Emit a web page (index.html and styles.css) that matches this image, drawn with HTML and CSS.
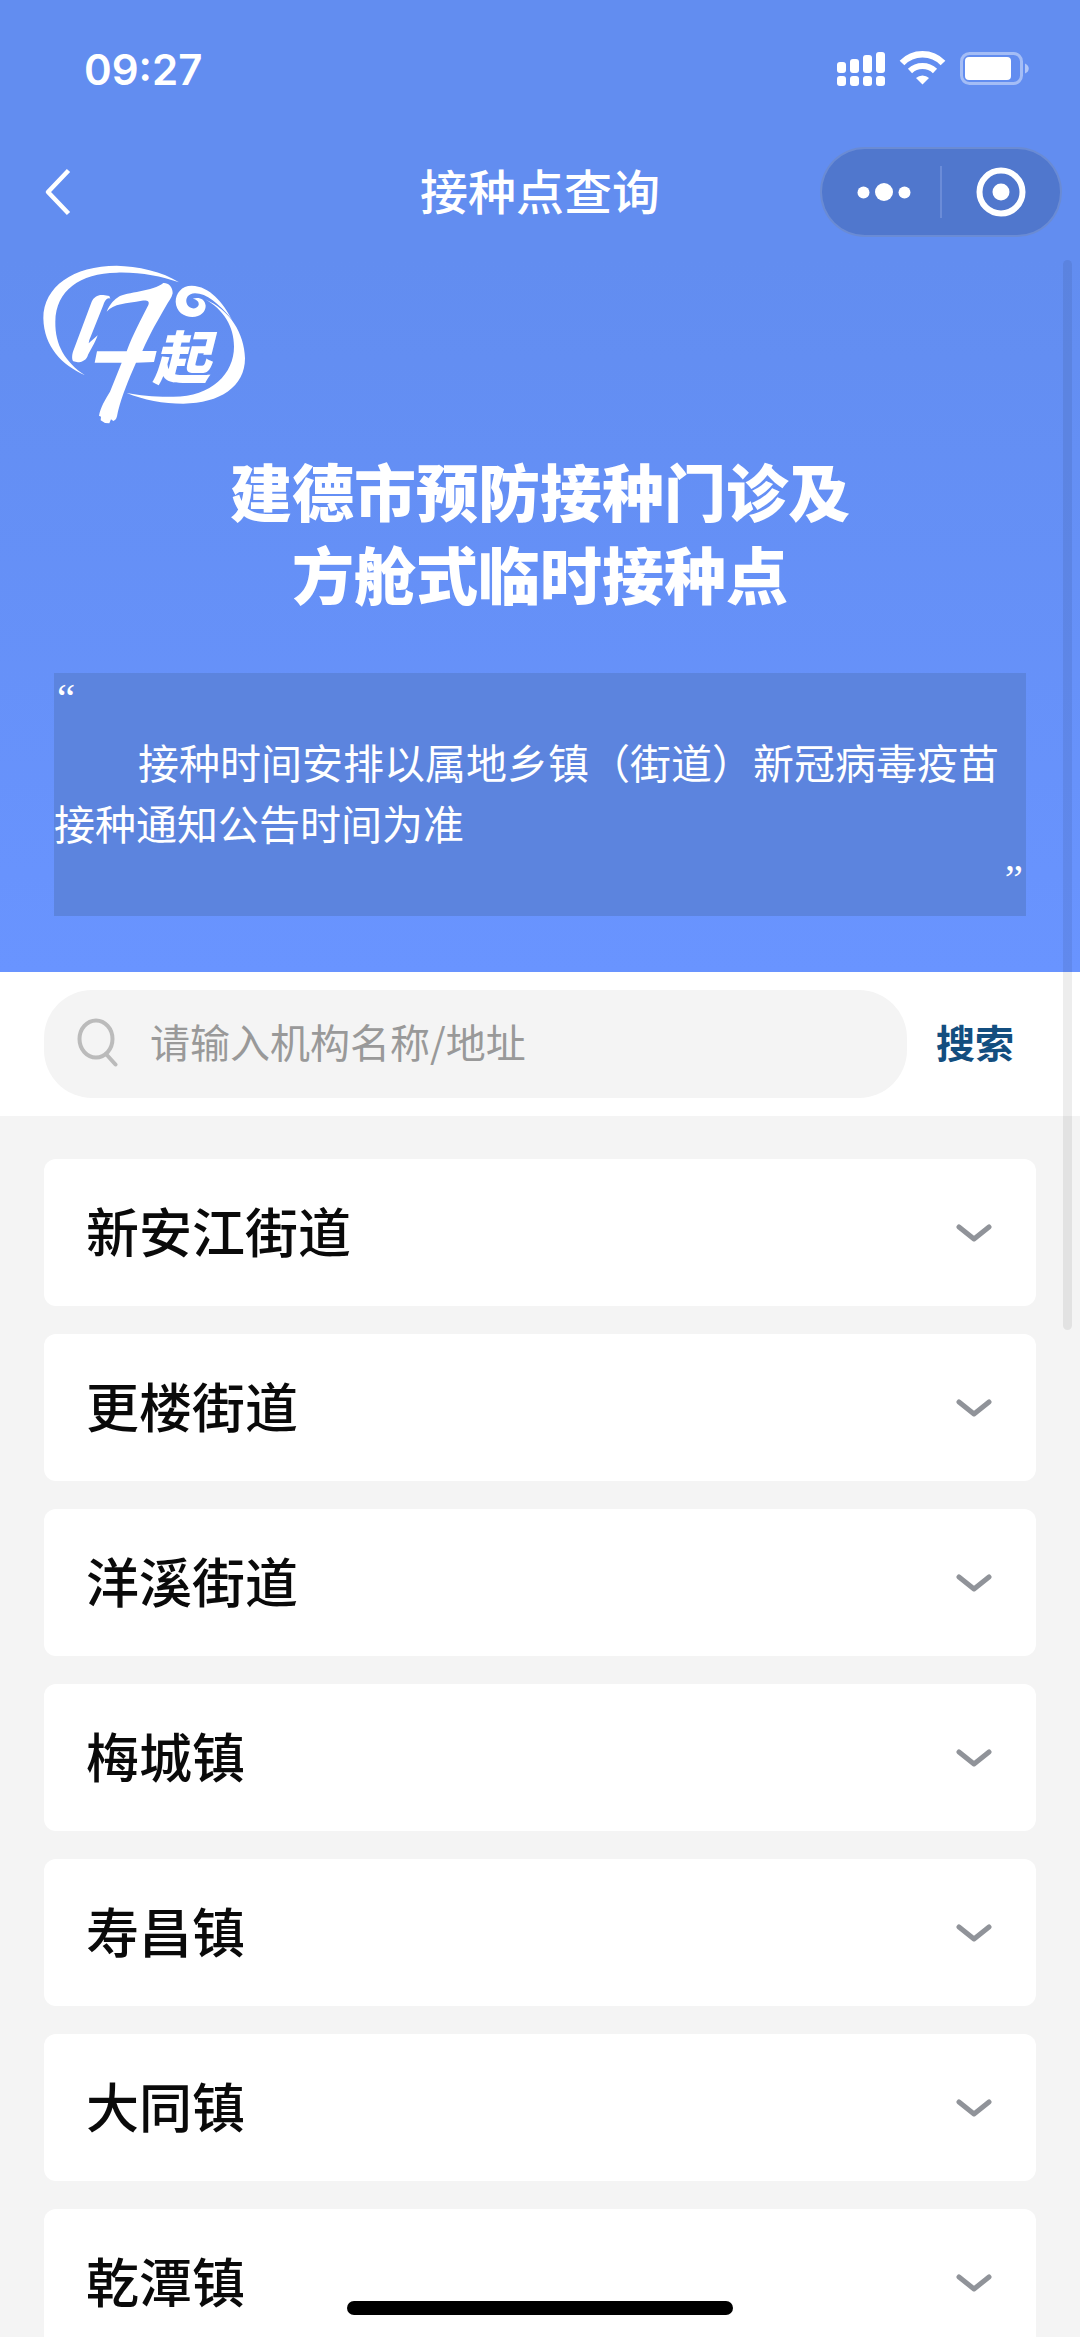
FILE: index.html
```html
<!DOCTYPE html>
<html lang="zh-CN">
<head>
<meta charset="utf-8">
<meta name="viewport" content="width=device-width, initial-scale=1">
<title>接种点查询</title>
<link rel="stylesheet" href="styles.css">
</head>
<body>
<div class="screen">
  <header class="hero">
    <div class="status">
      <time class="clock">09:27</time>
      <svg class="status-icons" width="194" height="38" viewBox="0 0 194 38" fill="#fff" aria-hidden="true">
        <rect x="1" y="12" width="9" height="11" rx="3"/>
        <rect x="14" y="9" width="9" height="14" rx="3"/>
        <rect x="27" y="5" width="9" height="18" rx="3"/>
        <rect x="40" y="2" width="9" height="21" rx="3"/>
        <rect x="1" y="26" width="9" height="10" rx="3"/>
        <rect x="14" y="26" width="9" height="10" rx="3"/>
        <rect x="27" y="26" width="9" height="10" rx="3"/>
        <rect x="40" y="26" width="9" height="10" rx="3"/>
        <g fill="none" stroke="#fff">
          <path d="M66 13a28.500 28.500 0 0 1 41 0" stroke-width="6.500"/>
          <path d="M74 21a18 18 0 0 1 25 0" stroke-width="6"/>
        </g>
        <path d="M80 28a9.500 9.500 0 0 1 13 0l-6.500 6.500z"/>
        <rect x="125.500" y="3.500" width="60" height="30" rx="8" fill="none" stroke="#fff" stroke-opacity=".42" stroke-width="3"/>
        <rect x="129" y="7" width="46" height="23" rx="4"/>
        <path d="M189 13.500c5 2 5 8 0 10z" fill-opacity=".5"/>
      </svg>
    </div>
    <nav class="navbar">
      <button class="back" type="button" aria-label="返回">
        <svg width="28" height="50" viewBox="0 0 28 50" fill="none" stroke="#fff" stroke-width="4.500" stroke-linejoin="round"><path d="M24.500 3.500 4 25l20.500 21.500"/></svg>
      </button>
      <h1 class="page-name">接种点查询</h1>
      <div class="capsule">
        <button type="button" class="cap-btn" aria-label="更多">
          <svg width="60" height="20" viewBox="-6 0 60 20" fill="#fff"><circle cx="6.500" cy="10.500" r="6"/><circle cx="27" cy="10" r="9"/><circle cx="47.500" cy="10.500" r="6"/></svg>
        </button>
        <span class="cap-line"></span>
        <button type="button" class="cap-btn" aria-label="关闭">
          <svg width="50" height="50" viewBox="0 0 50 50"><circle cx="25" cy="25" r="21.500" fill="none" stroke="#fff" stroke-width="6"/><circle cx="25" cy="25" r="8.500" fill="#fff"/></svg>
        </button>
      </div>
    </nav>
    <svg class="logo" width="230" height="190" viewBox="0 0 690 570" fill="#fff" role="img" aria-label="17起">
      <path d="M447 97C400 65 320 48 260 47C130 47 40 110 40 205C42 290 95 345 165 376C105 335 75 285 76 215C78 120 150 70 260 68C330 66 390 78 447 97Z"/>
      <path d="M605 207C580 160 540 108 485 107C455 107 437 130 437 155C438 185 462 201 487 201C512 200 527 185 527 167C525 145 505 140 488 146C500 148 508 155 506 165C500 180 478 178 471 163C464 145 475 130 495 130C530 130 565 160 605 207Z"/>
      <path d="M525 148C582 180 612 230 612 290C612 370 545 440 430 440C380 441 330 437 290 429C340 450 400 461 460 461C570 460 645 410 645 325C643 250 600 180 525 148Z"/>
      <path d="M185 155C192 140 205 133 220 135L238 138L241 146C230 142 225 152 220 165L178 270L176 280L203 256C195 280 178 305 172 320C165 335 145 340 130 334C124 328 126 310 132 297Z"/>
      <path d="M230 185C240 160 255 148 265 141C290 125 370 125 400 99C415 98 428 110 428 130C425 145 415 155 408 168C385 208 360 250 337 303L380 303L372 336L318 338C295 390 275 440 265 480C260 500 262 508 250 513L243 508L238 520L225 519L212 511L213 500L207 497C212 470 225 450 240 425L275 338L194 338L201 304L290 304C310 250 330 215 355 165C360 152 350 150 335 152C290 160 250 160 230 185Z"/>
      <text class="logo-word" x="368" y="388">起</text>
    </svg>
    <h2 class="headline">建德市预防接种门诊及<br>方舱式临时接种点</h2>
    <blockquote class="notice">
      <span class="mark">“</span>
      <p class="notice-text">接种时间安排以属地乡镇（街道）新冠病毒疫苗接种通知公告时间为准</p>
      <span class="mark mark-end">”</span>
    </blockquote>
  </header>
  <form class="search">
    <label class="field">
      <svg width="42" height="54" viewBox="0 0 42 54" fill="none" stroke="#bbb" stroke-width="4"><ellipse cx="20" cy="22" rx="16.500" ry="18.500"/><path d="M30 37l9.500 10.500" stroke-linecap="round"/></svg>
      <input class="query" type="text" placeholder="请输入机构名称/地址" aria-label="机构名称或地址">
    </label>
    <button class="submit" type="button">搜索</button>
  </form>
  <main class="towns">
    <button class="town" type="button"><span class="town-name">新安江街道</span><svg class="chev" viewBox="0 0 36 20"><path d="M3 4l15 12L33 4"/></svg></button>
    <button class="town" type="button"><span class="town-name">更楼街道</span><svg class="chev" viewBox="0 0 36 20"><path d="M3 4l15 12L33 4"/></svg></button>
    <button class="town" type="button"><span class="town-name">洋溪街道</span><svg class="chev" viewBox="0 0 36 20"><path d="M3 4l15 12L33 4"/></svg></button>
    <button class="town" type="button"><span class="town-name">梅城镇</span><svg class="chev" viewBox="0 0 36 20"><path d="M3 4l15 12L33 4"/></svg></button>
    <button class="town" type="button"><span class="town-name">寿昌镇</span><svg class="chev" viewBox="0 0 36 20"><path d="M3 4l15 12L33 4"/></svg></button>
    <button class="town" type="button"><span class="town-name">大同镇</span><svg class="chev" viewBox="0 0 36 20"><path d="M3 4l15 12L33 4"/></svg></button>
    <button class="town" type="button"><span class="town-name">乾潭镇</span><svg class="chev" viewBox="0 0 36 20"><path d="M3 4l15 12L33 4"/></svg></button>
  </main>
  <div class="scroll-thumb"></div>
  <div class="home-bar"></div>
</div>
</body>
</html>
```
FILE: styles.css
```css
* {
  box-sizing: border-box;
}

body,
h1,
h2,
p,
blockquote {
  margin: 0;
}

body {
  background: #f4f4f4;
  font-family: "Noto Sans CJK SC", "Liberation Sans", sans-serif;
}

button,
input {
  padding: 0;
  border: 0;
  background: none;
  color: inherit;
  font: inherit;
}

svg {
  display: block;
  flex: none;
}

.screen {
  position: relative;
  height: 100vh;
  overflow: hidden;
}

.hero {
  padding-bottom: 56px;
  background: linear-gradient(#628df0 260px, #6994ff);
  color: #fff;
}

/* system status row */
.status {
  display: flex;
  align-items: center;
  justify-content: space-between;
  height: 138px;
  padding: 0 50px 0 84px;
}

.clock {
  font-family: Inter, sans-serif;
  font-size: 42px;
  font-weight: 600;
}

/* navigation bar */
.navbar {
  display: grid;
  grid-template-columns: 1fr auto 1fr;
  align-items: center;
  height: 108px;
  padding: 0 18px 0 44px;
}

.page-name {
  padding: 0 26px 6px 0;
  font-size: 48px;
  font-weight: 500;
  line-height: 72px;
}

.back {
  justify-self: start;
}

.capsule {
  justify-self: end;
  display: flex;
  align-items: center;
  width: 242px;
  height: 90px;
  border: 2px solid rgba(255, 255, 255, 0.15);
  border-radius: 45px;
  background: #5077cd;
}

.cap-btn {
  flex: 1;
  display: flex;
  justify-content: center;
}

.cap-line {
  width: 2px;
  height: 52px;
  background: #6b8cd8;
}

.logo {
  margin: 4px 0 0 30px;
}

.logo-word {
  font-size: 172px;
  font-style: italic;
  font-weight: 900;
}

.headline {
  margin-top: 9px;
  font-size: 62px;
  font-weight: 900;
  line-height: 83px;
  text-align: center;
}

.notice {
  margin: 58px 54px 0;
  padding-bottom: 2px;
  background: #5c84de;
  line-height: 61px;
}

.notice-text {
  font-size: 41px;
  text-indent: 84px;
}

.mark {
  display: block;
  height: 58px;
  padding: 0 3px;
  font-family: "Liberation Serif", serif;
  font-size: 41px;
  line-height: 50px;
}

.mark-end {
  height: 61px;
  text-align: right;
}

/* search row */
.search {
  display: flex;
  align-items: center;
  gap: 29px;
  height: 144px;
  padding: 0 66px 0 44px;
  background: #fff;
}

.field {
  flex: 1;
  display: flex;
  align-items: center;
  gap: 32px;
  height: 108px;
  padding: 0 32px;
  border-radius: 48px;
  background: #f4f4f4;
}

.query {
  flex: 1;
  min-width: 0;
  padding-bottom: 6px;
  outline: 0;
  font-size: 40px;
  line-height: 60px;
}

.query::placeholder {
  color: #999;
  opacity: 1;
}

.submit {
  padding-bottom: 6px;
  color: #134e7f;
  font-size: 39px;
  font-weight: 700;
}

/* list of towns */
.towns {
  display: flex;
  flex-direction: column;
  gap: 28px;
  padding: 43px 44px;
}

.town {
  display: flex;
  flex: none;
  align-items: center;
  justify-content: space-between;
  height: 147px;
  padding: 0 44px 0 42px;
  border-radius: 12px;
  background: #fff;
  color: #0a0a0a;
  font-size: 53px;
  font-weight: 500;
}

.town-name {
  padding-bottom: 6px;
}

.chev {
  width: 36px;
  height: 20px;
  fill: none;
  stroke: #909399;
  stroke-width: 5;
  stroke-linecap: round;
  stroke-linejoin: round;
}

/* overlays */
.scroll-thumb {
  position: absolute;
  top: 260px;
  right: 8px;
  width: 9px;
  height: 1070px;
  border-radius: 5px;
  background: rgba(0, 0, 0, 0.07);
}

.home-bar {
  position: absolute;
  bottom: 22px;
  left: 50%;
  width: 386px;
  height: 14px;
  margin-left: -193px;
  border-radius: 7px;
  background: #000;
}
```
